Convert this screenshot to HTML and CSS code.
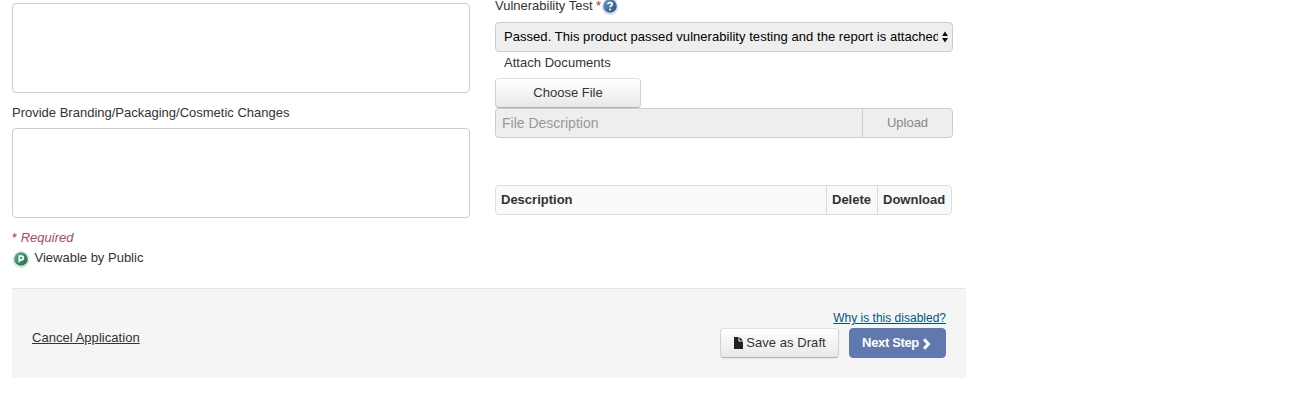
FILE: index.html
```html
<!DOCTYPE html>
<html lang="en">
<head>
<meta charset="utf-8">
<title>Application</title>
<link rel="stylesheet" href="styles.css">
</head>
<body>
<main class="page">
  <div class="columns">
    <section class="column column-left">
      <textarea class="textarea" aria-label="Changes"></textarea>
      <label class="label label-branding" for="branding">Provide Branding/Packaging/Cosmetic Changes</label>
      <textarea class="textarea" id="branding"></textarea>
      <p class="required"><span class="star">*</span> <i>Required</i></p>
      <p class="public">
        <svg class="public-icon" viewBox="0 0 18 18" aria-hidden="true">
          <defs><linearGradient id="green" x1="0" y1="0" x2="1" y2="1"><stop offset="0" stop-color="#69aa8d"/><stop offset="1" stop-color="#127048"/></linearGradient></defs>
          <circle cx="9" cy="9.6" r="8.3" fill="#d3dbd7"/>
          <circle cx="9" cy="8.9" r="7.9" fill="#e9eeeb"/>
          <circle cx="9" cy="9" r="6.8" fill="url(#green)"/>
          <path d="M7.3 12.3V6.2h2.2a1.8 1.8 0 0 1 0 3.7H7.5" fill="none" stroke="#fff" stroke-width="1.7"/>
        </svg>
        <span>Viewable by Public</span>
      </p>
    </section>
    <section class="column column-right">
      <div class="label label-test"><span>Vulnerability Test</span><span class="star">*</span>
        <svg class="help-icon" viewBox="0 0 18 18" aria-hidden="true">
          <defs><linearGradient id="blue" x1="0" y1="0" x2="1" y2="1"><stop offset="0" stop-color="#799bc4"/><stop offset="1" stop-color="#1d4f87"/></linearGradient></defs>
          <circle cx="9" cy="9.6" r="8.3" fill="#cfd7df"/>
          <circle cx="9" cy="8.9" r="7.9" fill="#e8eef4"/>
          <circle cx="9" cy="9" r="6.8" fill="url(#blue)"/>
          <path d="M6.9 7.3C6.9 5 11.2 5 11.2 7.3 11.2 8.7 9.1 8.7 9.1 10.3" fill="none" stroke="#fff" stroke-width="1.7"/>
          <circle cx="9.1" cy="12.5" r="1.05" fill="#fff"/>
        </svg>
      </div>
      <div class="select">
        <span class="select-value">Passed. This product passed vulnerability testing and the report is attached</span>
        <svg class="select-arrows" viewBox="0 0 6 12" aria-hidden="true"><path d="M0 5 3 0.5 6 5ZM0 7 3 11.5 6 7Z" fill="#111"/></svg>
      </div>
      <div class="label label-attach">Attach Documents</div>
      <button class="button button-file">Choose File</button>
      <div class="upload">
        <div class="upload-name">File Description</div>
        <div class="upload-action">Upload</div>
      </div>
      <div class="table">
        <div class="cell cell-description">Description</div>
        <div class="cell cell-delete">Delete</div>
        <div class="cell cell-download">Download</div>
      </div>
    </section>
  </div>
  <footer class="actions">
    <a class="cancel">Cancel Application</a>
    <div class="actions-right">
      <a class="why">Why is this disabled?</a>
      <div class="buttons">
        <button class="button button-save"><svg class="file-icon" viewBox="0 0 9 12" aria-hidden="true"><path d="M0 0H4.5V4.5H9V12H0ZM5.5 0 9 3.5H5.5Z" fill="#222"/></svg><span>Save as Draft</span></button>
        <button class="button button-next"><span>Next Step</span><svg class="chevron" viewBox="0 0 8 12" aria-hidden="true"><path d="M1.6 1.4 6 6 1.6 10.6" fill="none" stroke="#fff" stroke-width="3"/></svg></button>
      </div>
    </div>
  </footer>
</main>
</body>
</html>
```
FILE: styles.css
```css
* { box-sizing: border-box; }
body {
  margin: 0;
  background: #fff;
  color: #333;
  font: 13px/20px "Liberation Sans", Arial, sans-serif;
  overflow: hidden;
}
.page { width: 954px; margin-left: 12px; }
.columns { display: flex; gap: 25px; height: 288px; }
.column { width: 458px; display: flex; flex-direction: column; align-items: flex-start; }
.column-left { padding-top: 3px; }
.column-right { margin-top: -4px; }
.textarea {
  display: block;
  width: 458px;
  height: 90px;
  margin: 0;
  border: 1px solid #ccc;
  border-radius: 4px;
  background: #fff;
  resize: none;
}
.label { height: 20px; white-space: nowrap; }
.label-branding { margin: 10px 0 5px; }
.star { color: #b22f35; }
.required { margin: 10px 0 0; color: #b04a58; }
.public { margin: 0; display: flex; align-items: center; gap: 4.5px; }
.public-icon { width: 18px; height: 18px; margin-top: 1px; }
.label-test { display: flex; align-items: center; }
.label-test .star { margin-left: 3.5px; }
.help-icon { width: 18px; height: 18px; margin-left: -.5px; }
.select {
  display: flex;
  align-items: center;
  gap: 4px;
  width: 458px;
  height: 30px;
  margin-top: 6px;
  padding: 0 4px 0 8px;
  border: 1px solid #ccc;
  border-radius: 4px;
  background: #eee;
  color: #000;
}
.select-value { flex: 1; overflow: hidden; white-space: nowrap; letter-spacing: .046px; }
.select-arrows { flex: none; width: 6px; height: 12px; }
.label-attach { margin: 1px 0 5px 9px; letter-spacing: .03px; }
.button {
  display: flex;
  align-items: center;
  justify-content: center;
  height: 30px;
  margin: 0;
  padding: 0;
  border: 1px solid #ccc;
  border-color: #e0e0e0 #d2d2d2 #b3b3b3;
  border-radius: 4px;
  background: linear-gradient(#fff, #e8e8e8);
  box-shadow: 0 1px 2px rgba(0, 0, 0, .05);
  color: #333;
  font: inherit;
}
.button-file { width: 146px; }
.upload { display: flex; width: 458px; height: 30px; border: 1px solid #ccc; border-radius: 4px; background: #eee; line-height: 28px; }
.upload-name { width: 367px; padding-left: 6px; border-right: 1px solid #ccc; color: #999; font-size: 14px; }
.upload-action { flex: 1; text-align: center; color: #888; }
.table { display: flex; width: 457px; height: 30px; margin-top: 47px; border: 1px solid #ddd; border-radius: 4px; background: #f9f9f9; font-weight: bold; line-height: 28px; }
.cell { padding-left: 5px; }
.cell + .cell { border-left: 1px solid #ddd; }
.cell-description { width: 330px; }
.cell-delete { width: 51px; }
.cell-download { flex: 1; }
.actions { display: flex; justify-content: space-between; height: 90px; padding: 0 20px; border-top: 1px solid #e5e5e5; background: #f5f5f5; }
.cancel { margin-top: 39px; text-decoration: underline; letter-spacing: .04px; }
.actions-right { display: flex; flex-direction: column; align-items: flex-end; padding-top: 19px; }
.why { height: 20px; color: #005580; font-size: 12px; text-decoration: underline; }
.buttons { display: flex; gap: 10px; }
.button-save { width: 119px; gap: 3px; padding-left: 1px; letter-spacing: .05px; }
.file-icon { width: 9px; height: 12px; }
.button-next { width: 97px; gap: 3px; padding-right: 2px; border-color: #6178ae; background: #6178ae; box-shadow: none; color: #fff; font-weight: bold; letter-spacing: -.35px; }
.chevron { width: 9px; height: 12px; margin-top: 1px; }
```
